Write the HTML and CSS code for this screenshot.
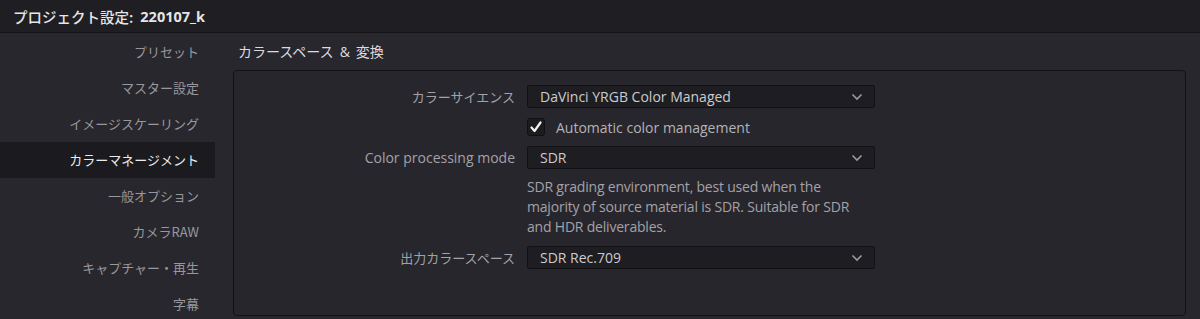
FILE: index.html
```html
<!DOCTYPE html>
<html lang="ja">
<head>
    <meta charset="UTF-8">
    <meta name="viewport" content="width=device-width, initial-scale=1.0">
    <title>プロジェクト設定</title>
    <link rel="stylesheet" href="styles.css">
</head>
<body>
    <div class="titlebar">
        <span class="title-label">プロジェクト設定:</span><span class="title-name">220107_k</span>
    </div>

    <div class="main">
        <ul class="sidebar">
            <li>プリセット</li>
            <li>マスター設定</li>
            <li>イメージスケーリング</li>
            <li class="active">カラーマネージメント</li>
            <li>一般オプション</li>
            <li>カメラRAW</li>
            <li>キャプチャー・再生</li>
            <li>字幕</li>
        </ul>

        <div class="content">
            <h2 class="section-title">カラースペース<span class="amp">&amp;</span>変換</h2>
            <div class="panel">
                <div class="row row-select">
                    <label class="field-label ja">カラーサイエンス</label>
                    <div class="select">
                        <span>DaVinci YRGB Color Managed</span>
                        <svg class="chevron" width="12" height="8" viewBox="0 0 12 8"><path d="M1.5 1.5 L6 6 L10.5 1.5" fill="none" stroke="#9b9aa0" stroke-width="1.6"/></svg>
                    </div>
                </div>
                <div class="row row-check">
                    <span class="field-label"></span>
                    <div class="check-wrap">
                        <span class="checkbox">
                            <svg width="14" height="14" viewBox="0 0 14 14"><path d="M2.5 7.5 L5.5 11 L11.5 2.5" fill="none" stroke="#f2f2f2" stroke-width="2.2" stroke-linecap="round" stroke-linejoin="round"/></svg>
                        </span>
                        <span class="check-text">Automatic color management</span>
                    </div>
                </div>
                <div class="row row-select row-mode">
                    <label class="field-label">Color processing mode</label>
                    <div class="select">
                        <span>SDR</span>
                        <svg class="chevron" width="12" height="8" viewBox="0 0 12 8"><path d="M1.5 1.5 L6 6 L10.5 1.5" fill="none" stroke="#9b9aa0" stroke-width="1.6"/></svg>
                    </div>
                </div>
                <div class="row row-desc">
                    <span class="field-label"></span>
                    <p class="desc">SDR grading environment, best used when the<br>majority of source material is SDR. Suitable for SDR<br>and HDR deliverables.</p>
                </div>
                <div class="row row-select">
                    <label class="field-label ja">出力カラースペース</label>
                    <div class="select">
                        <span>SDR Rec.709</span>
                        <svg class="chevron" width="12" height="8" viewBox="0 0 12 8"><path d="M1.5 1.5 L6 6 L10.5 1.5" fill="none" stroke="#9b9aa0" stroke-width="1.6"/></svg>
                    </div>
                </div>
            </div>
        </div>
    </div>
</body>
</html>
```

FILE: styles.css
```css
body {
    margin: 0;
    padding: 0;
    background-color: #28272d;
    font-family: "Open Sans", "Noto Sans CJK JP", sans-serif;
    color: #a3a2a8;
    height: 319px;
    overflow: hidden;
}
.titlebar {
    height: 32px;
    background-color: #1f1e23;
    border-bottom: 1px solid #141417;
    display: flex;
    align-items: center;
    padding-left: 13px;
    font-size: 14.5px;
    color: #e6e6e8;
}
.title-label {
    font-family: "Noto Sans CJK JP", sans-serif;
    font-weight: 500;
    margin-right: 7px;
}
.title-name {
    font-weight: 700;
}
.main {
    display: flex;
}
.sidebar {
    list-style: none;
    margin: 1px 0 0 0;
    padding: 0;
    width: 215px;
    flex-shrink: 0;
}
.sidebar li {
    height: 36px;
    line-height: 36px;
    text-align: right;
    padding-right: 16px;
    font-family: "Noto Sans CJK JP", sans-serif;
    font-size: 13px;
    color: #98979d;
}
.sidebar li.active {
    background-color: #1b1a1f;
    color: #ececee;
}
.content {
    flex: 1;
    padding: 0 14px 0 18px;
}
.section-title {
    margin: 0;
    height: 37px;
    line-height: 37px;
    padding-left: 5px;
    font-family: "Noto Sans CJK JP", sans-serif;
    font-size: 14px;
    font-weight: 400;
    color: #dcdce0;
}
.amp {
    font-family: "Open Sans", sans-serif;
    margin: 0 6px;
}
.panel {
    border: 1px solid #121215;
    border-radius: 4px;
    background-color: #27262c;
    height: 246px;
    padding-top: 14px;
    box-sizing: border-box;
}
.row {
    display: flex;
    align-items: center;
}
.field-label {
    width: 281px;
    flex-shrink: 0;
    text-align: right;
    margin-right: 12px;
    font-size: 14px;
    color: #a3a2a8;
}
.field-label.ja {
    font-family: "Noto Sans CJK JP", sans-serif;
    font-size: 13px;
}
.select {
    width: 348px;
    height: 23px;
    box-sizing: border-box;
    background-color: #1e1e22;
    border: 1px solid #121215;
    border-radius: 2px;
    display: flex;
    align-items: center;
    justify-content: space-between;
    padding: 0 12px;
    font-size: 14px;
    color: #cbcbcf;
}
.chevron {
    display: block;
    margin-right: -1px;
}
.row-check {
    margin-top: 9px;
    height: 20px;
}
.check-wrap {
    display: flex;
    align-items: center;
}
.checkbox {
    width: 18px;
    height: 18px;
    box-sizing: border-box;
    background-color: #1c1c1f;
    border: 1px solid #111113;
    border-radius: 3px;
    display: flex;
    align-items: center;
    justify-content: center;
}
.check-text {
    margin-left: 11px;
    font-size: 14px;
    color: #b4b3b8;
}
.row-mode {
    margin-top: 9px;
}
.row-desc {
    align-items: flex-start;
    margin-top: 8px;
}
.desc {
    margin: 0;
    font-size: 14px;
    line-height: 20px;
    color: #a3a2a8;
    letter-spacing: -0.2px;
}
.row-desc + .row {
    margin-top: 9px;
}
```
